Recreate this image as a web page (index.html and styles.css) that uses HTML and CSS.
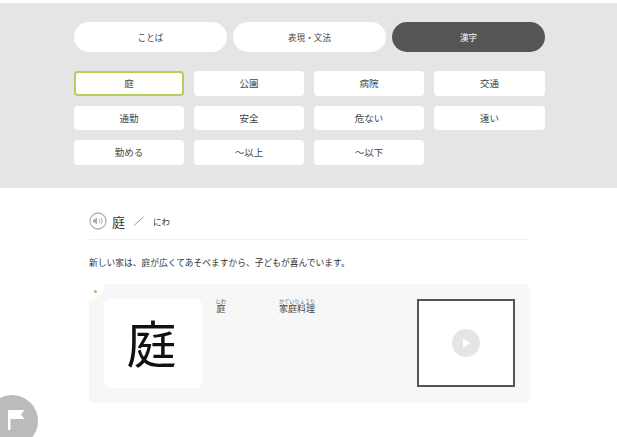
FILE: index.html
```html
<!DOCTYPE html>
<html lang="ja">
<head>
<meta charset="utf-8">
<title>漢字</title>
<link rel="stylesheet" href="styles.css">
</head>
<body>
<section class="nav">
  <div class="tabs">
    <div class="tab">ことば</div>
    <div class="tab">表現・文法</div>
    <div class="tab tab-active">漢字</div>
  </div>
  <div class="words">
    <div class="word word-active">庭</div>
    <div class="word">公園</div>
    <div class="word">病院</div>
    <div class="word">交通</div>
    <div class="word">通勤</div>
    <div class="word">安全</div>
    <div class="word">危ない</div>
    <div class="word">遠い</div>
    <div class="word">勤める</div>
    <div class="word">～以上</div>
    <div class="word">～以下</div>
  </div>
</section>
<main class="content">
  <header class="entry-head">
    <svg class="speaker" width="18" height="18" viewBox="0 0 18 18">
      <circle cx="9" cy="9" r="8" fill="#fff" stroke="#b0b0b0" stroke-width="1.300"/>
      <path d="M4 7.500h1.500l2.500-2v7l-2.500-2H4z" fill="#a8a8a8"/>
      <path d="M10 7.200a2.500 2.500 0 0 1 0 3.600M11.800 5.800a4.500 4.500 0 0 1 0 6.400" fill="none" stroke="#a8a8a8" stroke-width="1"/>
    </svg>
    <span class="entry-word">庭</span>
    <svg class="slash" width="12" height="10" viewBox="0 0 12 10"><path d="M1 9.500L10.500 1" stroke="#999" stroke-width="1" fill="none"/></svg>
    <span class="entry-read">にわ</span>
  </header>
  <p class="sentence">新しい家は、庭が広くてあそべますから、子どもが喜んでいます。</p>
  <section class="card">
    <div class="corner"><span class="dot"></span></div>
    <div class="glyph">庭</div>
    <div class="examples">
      <ruby class="ex">庭<rt>にわ</rt></ruby>
      <ruby class="ex">家庭料理<rt>かていりょうり</rt></ruby>
    </div>
    <div class="video"><span class="play"></span></div>
  </section>
</main>
<div class="flag">
  <svg width="17" height="20" viewBox="0 0 17 20"><path d="M0 0h16.500l-3.500 4.500 3.500 4.500H2.500v11H0z" fill="#fff"/></svg>
</div>
</body>
</html>
```
FILE: styles.css
```css
html, body {
  margin: 0;
  height: 437px;
  overflow: hidden;
  background: #fff;
  font-family: "Noto Sans CJK JP", "Liberation Sans", sans-serif;
  color: #333;
}
.nav {
  margin-top: 3px;
  height: 185px;
  box-sizing: border-box;
  padding: 19px 72px 0 74px;
  background: #e5e5e5;
}
.tabs {
  display: flex;
  gap: 6px;
}
.tab {
  flex: 1;
  height: 30px;
  border-radius: 15px;
  background: #fff;
  display: flex;
  align-items: center;
  justify-content: center;
  font-size: 8.600px;
  color: #444;
}
.tab-active {
  background: #555;
  color: #fff;
}
.words {
  display: grid;
  grid-template-columns: 110px 110px 110px 111px;
  column-gap: 10px;
  row-gap: 10px;
  margin-top: 19px;
}
.word {
  height: 24.500px;
  box-sizing: border-box;
  border-radius: 4px;
  background: #fff;
  display: flex;
  align-items: center;
  justify-content: center;
  font-size: 9.500px;
  color: #444;
}
.word-active {
  border: 2px solid #b2d05c;
}
.content {
  padding: 0 87px 0 89px;
}
.entry-head {
  display: flex;
  align-items: center;
  height: 52px;
  box-sizing: border-box;
  border-bottom: 1px solid #f2f2f2;
  padding-top: 15px;
}
.speaker {
  margin-right: 5px;
}
.entry-word {
  font-size: 13px;
  color: #333;
}
.slash {
  margin-left: 8px;
  margin-right: 8px;
}
.entry-read {
  font-size: 8.500px;
  color: #333;
}
.sentence {
  margin: 0;
  height: 44px;
  padding-top: 17px;
  box-sizing: border-box;
  font-size: 8.750px;
  line-height: 12px;
  color: #333;
}
.card {
  position: relative;
  display: flex;
  height: 119px;
  box-sizing: border-box;
  padding: 15px;
  border-radius: 5px;
  background: #f7f7f7;
}
.corner {
  position: absolute;
  left: 0;
  top: 0;
  width: 16px;
  height: 16px;
  background: #fff;
  border-bottom-right-radius: 16px;
}
.dot {
  position: absolute;
  left: 5px;
  top: 6px;
  width: 3px;
  height: 3px;
  border-radius: 50%;
  background: #9ec63a;
}
.glyph {
  width: 98px;
  height: 89px;
  box-sizing: border-box;
  padding: 0 3px 6px 0;
  border-radius: 6px;
  background: #fff;
  display: flex;
  align-items: center;
  justify-content: center;
  font-size: 50px;
  line-height: 1;
  color: #111;
}
.examples {
  flex: 1;
  display: flex;
  align-items: flex-start;
  padding-left: 14px;
  gap: 53px;
  height: 20px;
  margin-top: -1px;
}
.ex {
  font-size: 9px;
  line-height: 9px;
  color: #444;
}
.ex rt {
  font-size: 5px;
  line-height: 4px;
  color: #555;
}
.video {
  width: 98px;
  height: 88px;
  box-sizing: border-box;
  border: 2px solid #555;
  background: #fff;
  display: flex;
  align-items: center;
  justify-content: center;
}
.play {
  position: relative;
  width: 28px;
  height: 28px;
  border-radius: 50%;
  background: #e5e5e5;
}
.play::after {
  content: "";
  position: absolute;
  left: 11px;
  top: 9px;
  border-left: 7px solid #fff;
  border-top: 5px solid transparent;
  border-bottom: 5px solid transparent;
}
.flag {
  position: fixed;
  left: -14px;
  top: 395px;
  width: 52px;
  height: 52px;
  border-radius: 50%;
  background: #bbb;
}
.flag svg {
  position: absolute;
  left: 22px;
  top: 15px;
}
```
